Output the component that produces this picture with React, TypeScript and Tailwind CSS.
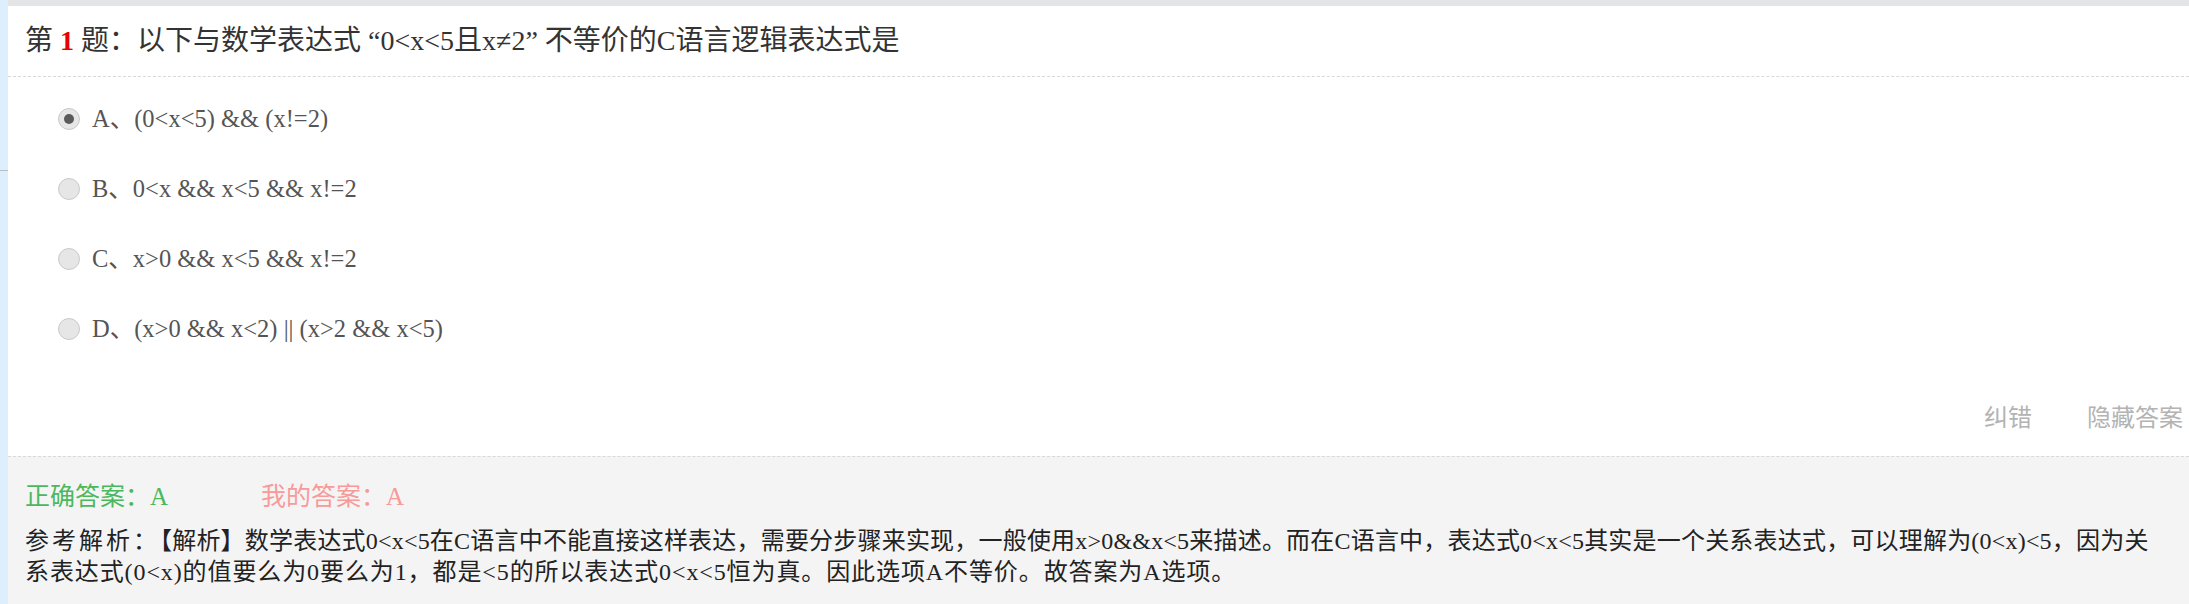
import React from "react";

const serif = { fontFamily: '"Liberation Serif", "Noto Sans CJK SC", serif' };

function Radio({ checked }: { checked?: boolean }) {
  return (
    <span className="flex h-[22px] w-[22px] shrink-0 items-center justify-center rounded-full border border-[#c9c9c9] bg-[#e6e6e6]">
      {checked ? <span className="h-[10px] w-[10px] rounded-full bg-[#5a5a5a]" /> : null}
    </span>
  );
}

const options = [
  { label: "A", text: "(0<x<5) && (x!=2)", checked: true },
  { label: "B", text: "0<x && x<5 && x!=2" },
  { label: "C", text: "x>0 && x<5 && x!=2" },
  { label: "D", text: "(x>0 && x<2) || (x>2 && x<5)" },
];

export default function App() {
  return (
    <div className="flex min-h-[604px] w-full bg-white" style={serif}>
      <div className="flex w-[8px] shrink-0 flex-col bg-[#ddeefc]">
        <div className="h-[170px]" />
        <div className="h-px bg-[#b9bcc0]" />
      </div>
      <div className="flex min-w-0 flex-1 flex-col">
        <div className="h-[6px] bg-[#e3e4e6]" />
        <div className="flex h-[71px] items-center border-b border-dashed border-[#d9d9d9] pl-[17px] text-[28px] text-[#333]">
          <span className="whitespace-nowrap">
            第 <span className="font-bold text-[#e60000]">1</span> 题：以下与数学表达式 “0&lt;x&lt;5且x≠2” 不等价的C语言逻辑表达式是
          </span>
        </div>
        <div className="flex flex-col pt-[7px]">
          {options.map((o) => (
            <div key={o.label} className="flex h-[70px] items-center pl-[50px] text-[24.5px] text-[#555]">
              <Radio checked={o.checked} />
              <span className="ml-[12px] whitespace-pre">
                {o.label}、{o.text}
              </span>
            </div>
          ))}
        </div>
        <div className="flex h-[92px] items-start justify-end gap-[55px] pr-[6px] pt-[37px] text-[24px] leading-[30px] text-[#b3b3b3]" style={{ fontFamily: '"Noto Sans CJK SC", sans-serif' }}>
          <span>纠错</span>
          <span>隐藏答案</span>
        </div>
        <div className="flex flex-1 flex-col border-t border-dashed border-[#d9d9d9] bg-[#f4f4f4] pl-[17px] pr-[6px] pt-[25px]">
          <div className="flex text-[25px] leading-[30px]">
            <span className="w-[236px] text-[#4cb85e]">正确答案：A</span>
            <span className="text-[#f79a9a]">我的答案：A</span>
          </div>
          <p className="mt-[14px] whitespace-nowrap text-[24px] leading-[31px] tracking-[0.2px] text-[#222]">
            <span className="tracking-[3px]">参考解析：</span>【解析】数学表达式0&lt;x&lt;5在C语言中不能直接这样表达，需要分步骤来实现，一般使用x&gt;0&amp;&amp;x&lt;5来描述。而在C语言中，表达式0&lt;x&lt;5其实是一个关系表达式，可以理解为(0&lt;x)&lt;5，因为关
            <br />
            <span className="tracking-[0.9px]">系表达式(0&lt;x)的值要么为0要么为1，都是&lt;5的所以表达式0&lt;x&lt;5恒为真。因此选项A不等价。故答案为A选项。</span>
          </p>
        </div>
      </div>
    </div>
  );
}
